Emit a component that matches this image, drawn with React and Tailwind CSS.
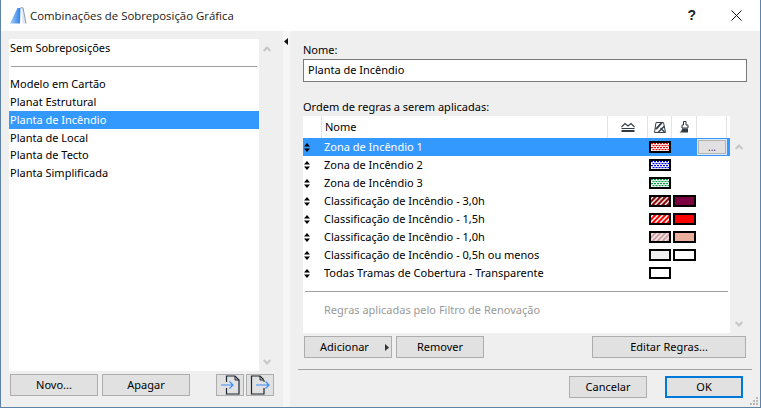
import React from 'react';

const listItems = ['Modelo em Cartão', 'Planat Estrutural', 'Planta de Incêndio', 'Planta de Local', 'Planta de Tecto', 'Planta Simplificada'];

const rules = [
  { name: 'Zona de Incêndio 1', a: 'dotsRed', selected: true },
  { name: 'Zona de Incêndio 2', a: 'dotsBlue' },
  { name: 'Zona de Incêndio 3', a: 'dotsGreen' },
  { name: 'Classificação de Incêndio - 3,0h', a: 'hatchDark', b: '#7a0040' },
  { name: 'Classificação de Incêndio - 1,5h', a: 'hatchRed', b: '#ff0000' },
  { name: 'Classificação de Incêndio - 1,0h', a: 'hatchPink', b: '#e8ae9c' },
  { name: 'Classificação de Incêndio - 0,5h ou menos', a: 'plainGrey', b: '#ffffff' },
  { name: 'Todas Tramas de Cobertura - Transparente', a: 'plainWhite' },
];

const Button = ({ children, className = '', border = 'border border-[#adadad]' }) => (
  <button className={`h-[22px] ${border} bg-[#e1e1e1] text-center text-black ${className}`}>
    {children}
  </button>
);

const ChevronUp = () => (
  <svg width="8" height="6" viewBox="0 0 8 6"><path d="M0.7 5 L4 1.5 L7.3 5" fill="none" stroke="#c6c6c6" strokeWidth="2" /></svg>
);

const ChevronDown = () => (
  <svg width="8" height="6" viewBox="0 0 8 6"><path d="M0.7 1 L4 4.5 L7.3 1" fill="none" stroke="#c6c6c6" strokeWidth="2" /></svg>
);

const SortArrows = () => (
  <svg width="6" height="9" viewBox="0 0 6 9" fill="#000">
    <path d="M3 0 L6 3.5 L0 3.5 Z" />
    <path d="M0 5.5 L6 5.5 L3 9 Z" />
  </svg>
);

const Dots = ({ color }) => (
  <svg width="18" height="8" className="block">
    {Array.from({ length: 4 }).map((_, r) =>
      Array.from({ length: 7 }).map((_, c) => (
        <rect key={`${r}-${c}`} x={c * 3 + (r % 2) * 1.5} y={r * 2} width="2" height="1.2" fill={color} />
      ))
    )}
  </svg>
);

const Hatch = ({ bg, line }) => (
  <svg width="18" height="8" className="block">
    <rect width="18" height="8" fill={bg} />
    {[-6, -1, 4, 9, 14, 19].map((x) => (
      <path key={x} d={`M${x} 8 L${x + 8} 0`} stroke={line} strokeWidth="1.5" />
    ))}
  </svg>
);

const Swatch = ({ kind }) => {
  let inner = null;
  if (kind === 'dotsRed') inner = <Dots color="#f00000" />;
  if (kind === 'dotsBlue') inner = <Dots color="#0000f0" />;
  if (kind === 'dotsGreen') inner = <Dots color="#00a040" />;
  if (kind === 'hatchDark') inner = <Hatch bg="#8a0a0a" line="#f4e8e8" />;
  if (kind === 'hatchRed') inner = <Hatch bg="#ff0000" line="#ffffff" />;
  if (kind === 'hatchPink') inner = <Hatch bg="#cfa0a4" line="#f4ecec" />;
  return (
    <div className={`w-[22px] h-[12px] border-2 border-black ${kind === 'plainGrey' ? 'bg-[#efefef]' : 'bg-white'}`}>
      {inner}
    </div>
  );
};

const ImportIcon = () => (
  <svg width="24" height="20" viewBox="0 0 24 20" fill="none">
    <path d="M8.5 7 V1 H17 L21 5 V19 H8.5 V13" stroke="#1c2530" strokeWidth="1.2" />
    <path d="M17 1 V5 H21" stroke="#1c2530" strokeWidth="1" />
    <path d="M3 10 H15 M11.5 6.5 L15 10 L11.5 13.5" stroke="#3d8ef5" strokeWidth="1.2" />
  </svg>
);

const ExportIcon = () => (
  <svg width="24" height="20" viewBox="0 0 24 20" fill="none">
    <path d="M15.5 4.5 L12 1 H3.5 V19 H16 V13" stroke="#1c2530" strokeWidth="1.2" />
    <path d="M12 1 V5 H16 V7" stroke="#1c2530" strokeWidth="1" />
    <path d="M8 10 H21 M17.5 6.5 L21 10 L17.5 13.5" stroke="#3d8ef5" strokeWidth="1.2" />
  </svg>
);

export default function App() {
  return (
    <div className="relative w-[761px] h-[408px] flex flex-col border-x border-b border-[#5f83a6] bg-[#efefef] text-[11px] text-black overflow-hidden font-['Noto_Sans',sans-serif]">
      {/* title bar */}
      <div className="h-[31px] bg-white flex items-center shrink-0">
        <svg width="18" height="18" viewBox="0 0 18 18" className="ml-[8px]">
          <defs>
            <linearGradient id="logo" x1="0" y1="0" x2="1" y2="0">
              <stop offset="0" stopColor="#a8d0f8" />
              <stop offset="1" stopColor="#2f7fe8" />
            </linearGradient>
          </defs>
          <path d="M1 16.5 L8.5 1 L11.5 1 L11 16.5 Z" fill="url(#logo)" />
          <path d="M12.5 1 L14 1 L17 16.5 L13.5 16.5 Z" fill="#dfe8f2" />
          <path d="M11.5 0.8 L14 0.8 L17 16.5" fill="none" stroke="#7f8ea0" strokeWidth="0.9" />
        </svg>
        <span className="ml-[3px] text-[11.4px] text-[#1a1a1a] font-['Open_Sans',sans-serif]">Combinações de Sobreposição Gráfica</span>
        <span className="ml-auto text-[14px] font-bold text-[#222] font-['Liberation_Sans',sans-serif]">?</span>
        <svg width="11" height="11" viewBox="0 0 11 11" className="ml-[35px] mr-[18px]">
          <path d="M0.5 0.5 L10.5 10.5 M10.5 0.5 L0.5 10.5" stroke="#111" strokeWidth="1" />
        </svg>
      </div>

      <div className="flex flex-1 min-h-0">
        {/* left panel */}
        <div className="w-[282px] shrink-0 pl-[8px] pt-[8px]">
          <div className="flex h-[332px]">
            <div className="w-[250px] bg-white">
              <div className="h-[18px] pl-[1px] flex items-center">Sem Sobreposições</div>
              <div className="h-[18.5px] flex items-center">
                <div className="w-full mx-[2px] h-px bg-[#a0a0a0]" />
              </div>
              {listItems.map((item) => (
                <div
                  key={item}
                  className={`h-[17.8px] pl-[1px] flex items-center ${item === 'Planta de Incêndio' ? 'bg-[#3399ff] text-white' : ''}`}
                >
                  {item}
                </div>
              ))}
            </div>
            <div className="w-[16px] flex flex-col justify-between items-center py-[7px] pb-[6px]">
              <ChevronUp />
              <ChevronDown />
            </div>
          </div>
          <div className="flex mt-[3px] pl-[1px]">
            <Button className="w-[88px]">Novo...</Button>
            <Button className="w-[88px] ml-[4px]">Apagar</Button>
            <Button className="w-[28px] ml-[26px] flex items-center justify-center"><ImportIcon /></Button>
            <Button className="w-[28px] ml-[2px] flex items-center justify-center"><ExportIcon /></Button>
          </div>
        </div>

        {/* splitter */}
        <div className="w-[7px] shrink-0 bg-[#f6f6f6] pt-[7px] pl-[1px]">
          <svg width="4" height="7" viewBox="0 0 4 7"><path d="M4 0 V7 L0 3.5 Z" fill="#111" /></svg>
        </div>

        {/* right panel */}
        <div className="flex-1 min-w-0 flex flex-col">
          <div className="pl-[13px] pr-[13px] h-[338px] flex flex-col">
            <div className="mt-[11px] h-[15px] leading-[15px]">Nome:</div>
            <div className="mt-[2px] h-[23px] w-[444px] border border-[#7a7a7a] bg-white pl-[4px] flex items-center">Planta de Incêndio</div>
            <div className="mt-[17px] h-[15px] leading-[15px]">Ordem de regras a serem aplicadas:</div>

            <div className="flex mt-[2px] h-[217px]">
              <div className="w-[427px] bg-white flex flex-col">
                <div className="h-[22px] flex bg-white shrink-0">
                  <div className="w-[19px] border-r border-[#e3e3e3]" />
                  <div className="w-[286px] pl-[3px] flex items-center border-r border-[#e3e3e3]">Nome</div>
                  <div className="w-[40px] flex items-center justify-center border-r border-[#e3e3e3]">
                    <svg width="14" height="10" viewBox="0 0 14 10" fill="none">
                      <path d="M0.5 5 L4 1.5 L7 4 L10 1.5 L13.5 5" stroke="#2f3a44" strokeWidth="1.1" />
                      <path d="M0.5 6.5 H13.5" stroke="#2f3a44" strokeWidth="1" />
                      <path d="M0.5 9 H13.5" stroke="#2f3a44" strokeWidth="2" />
                    </svg>
                  </div>
                  <div className="w-[24px] flex items-center justify-center border-r border-[#e3e3e3]">
                    <svg width="12" height="11" viewBox="0 0 12 11" fill="none">
                      <path d="M2 0.5 H9.5 L11.5 10.5 H0.5 Z" stroke="#3a444e" strokeWidth="1" />
                      <path d="M0.8 7 L6.5 0.8 L9 0.8 L3 7.5 Z" fill="#3a444e" />
                      <path d="M4 10.5 L10.5 4 M6.5 6 L10.5 10" stroke="#3a444e" strokeWidth="1.5" />
                    </svg>
                  </div>
                  <div className="w-[25px] flex items-center justify-center border-r border-[#e3e3e3]">
                    <svg width="11" height="12" viewBox="0 0 11 12" fill="none">
                      <path d="M4.5 0.5 H7 V4 H9 V7 H3 V4 H4.5 Z" stroke="#2f3a44" strokeWidth="1" />
                      <path d="M3 7.5 H9 V11.5 H0.5 C2 10.5 3 9.5 3 7.5 Z" fill="#2f3a44" />
                    </svg>
                  </div>
                  <div className="w-[30px] border-r border-[#e3e3e3]" />
                </div>

                {rules.map((rule) => (
                  <div
                    key={rule.name}
                    className={`h-[18px] flex items-center shrink-0 ${rule.selected ? 'bg-[#3399ff] text-white' : ''}`}
                  >
                    <div className="w-[21px] pl-[1px] flex"><SortArrows /></div>
                    <div className="w-[325px] truncate">{rule.name}</div>
                    <Swatch kind={rule.a} />
                    <div className="w-[2px]" />
                    {rule.b ? (
                      <div className="w-[23px] h-[12px] border-2 border-black" style={{ backgroundColor: rule.b }} />
                    ) : (
                      <div className="w-[23px]" />
                    )}
                    {rule.selected && (
                      <div className="ml-[1px] w-[30px] h-[16px] border-2 border-[#dbe9f7] bg-[#e1e1e1] outline outline-[#b4b4b4] -outline-offset-2 flex items-end justify-center text-[#5a2a6a] leading-[11px] text-[10px]">
                        ...
                      </div>
                    )}
                  </div>
                ))}

                <div className="h-px bg-[#a0a0a0] mx-[2px] mt-[9px]" />
                <div className="pl-[21px] mt-[10px] text-[#9a9a9a]">Regras aplicadas pelo Filtro de Renovação</div>
              </div>
              <div className="w-[17px] flex flex-col justify-between items-center pt-[28px] pb-[6px]">
                <ChevronUp />
                <ChevronDown />
              </div>
            </div>

            <div className="flex mt-[3px] pl-[1px]">
              <Button className="w-[88px] flex items-center pl-[15px]">
                Adicionar
                <svg width="4" height="7" viewBox="0 0 4 7" className="ml-[16px]"><path d="M0 0 V7 L4 3.5 Z" fill="#333" /></svg>
              </Button>
              <Button className="w-[88px] ml-[4px]">Remover</Button>
              <Button className="w-[154px] ml-[108px]">Editar Regras...</Button>
            </div>
          </div>

          <div className="mx-[8px] h-px bg-[#a0a0a0]" />

          <div className="flex mt-[6px] pl-[279px]">
            <Button className="w-[78px]">Cancelar</Button>
            <Button className="w-[78px] ml-[18px]" border="border-2 border-[#0078d7]">OK</Button>
          </div>
        </div>
      </div>

      {/* resize grip */}
      <svg width="9" height="9" viewBox="0 0 9 9" className="absolute right-[1px] bottom-[1px]" fill="#b8b8b8">
        <rect x="6" y="0" width="2" height="2" />
        <rect x="3" y="3" width="2" height="2" />
        <rect x="6" y="3" width="2" height="2" />
        <rect x="0" y="6" width="2" height="2" />
        <rect x="3" y="6" width="2" height="2" />
        <rect x="6" y="6" width="2" height="2" />
      </svg>
    </div>
  );
}
